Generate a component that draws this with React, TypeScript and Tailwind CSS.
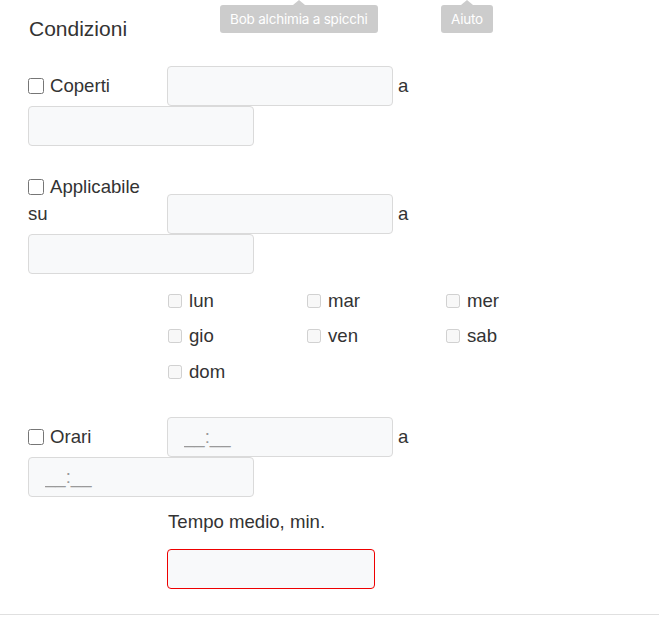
// Conditions form panel
const days = ['lun', 'mar', 'mer', 'gio', 'ven', 'sab', 'dom'];

const Tooltip: React.FC<{ text: string; className: string }> = ({ text, className }) => (
  <div className={`absolute top-[5px] ${className}`}>
    <div className="absolute left-1/2 -top-[5px] -ml-[6px] w-0 h-0 border-x-[6px] border-x-transparent border-b-[5px] border-b-[#cccccc]" />
    <div className="h-[28px] px-[10px] rounded-[3px] bg-[#cccccc] text-white text-[13.5px] leading-[28px] font-['Inter',sans-serif] tracking-[-0.2px] whitespace-nowrap">
      {text}
    </div>
  </div>
);

const Field: React.FC<{ width?: string; placeholder?: string; error?: boolean }> = ({ width = 'w-[226px]', placeholder, error }) => (
  <input
    type="text"
    placeholder={placeholder}
    className={`${width} h-[40px] px-[16px] rounded-[4px] border bg-[#f8f9fa] text-[18.6px] text-[#333] placeholder:text-[#9a9a9a] outline-none ${
      error ? 'border-[#ee0000]' : 'border-[#dadada]'
    }`}
  />
);

const Check: React.FC = () => (
  <input type="checkbox" className="w-[16px] h-[16px] m-0 mr-[6px] align-[-2px]" />
);

const Range: React.FC<{ label: React.ReactNode; placeholder?: string }> = ({ label, placeholder }) => (
  <div>
    <div className="flex [align-items:last_baseline]">
      <label className="w-[139px] shrink-0 leading-[27px]">{label}</label>
      <Field placeholder={placeholder} />
      <span className="ml-[5px]">a</span>
    </div>
    <Field placeholder={placeholder} />
  </div>
);

export default function App() {
  return (
    <div className="relative w-[659px] h-[637px] bg-white text-[#333] text-[18.6px] font-['Liberation_Sans',Arial,sans-serif]">
      <Tooltip text="Bob alchimia a spicchi" className="left-[220px]" />
      <Tooltip text="Aiuto" className="left-[441px]" />

      <div className="pl-[28px] pt-[14px]">
        <h2 className="pl-px text-[21px] leading-[30px]">Condizioni</h2>

        <div className="mt-[22px]">
          <Range
            label={
              <>
                <Check />
                Coperti
              </>
            }
          />
        </div>

        <div className="mt-[27px]">
          <Range
            label={
              <>
                <Check />
                Applicabile
                <br />
                su
              </>
            }
          />
        </div>

        <div className="ml-[139px] mt-[9px] grid grid-cols-3 w-[417px]">
          {days.map((d) => (
            <label key={d} className="flex items-center h-[35.5px] pl-px">
              <input type="checkbox" disabled className="w-[14px] h-[14px] m-0 mr-[7px]" />
              {d}
            </label>
          ))}
        </div>

        <div className="mt-[27px]">
          <Range
            placeholder="__:__"
            label={
              <>
                <Check />
                Orari
              </>
            }
          />
        </div>

        <div className="ml-[139px] mt-[11px]">
          <div className="pl-px leading-[27px]">Tempo medio, min.</div>
          <div className="mt-[14px]">
            <Field width="w-[208px]" error />
          </div>
        </div>
      </div>

      <div className="mt-[25px] border-t border-[#e0e0e0]" />
    </div>
  );
}
